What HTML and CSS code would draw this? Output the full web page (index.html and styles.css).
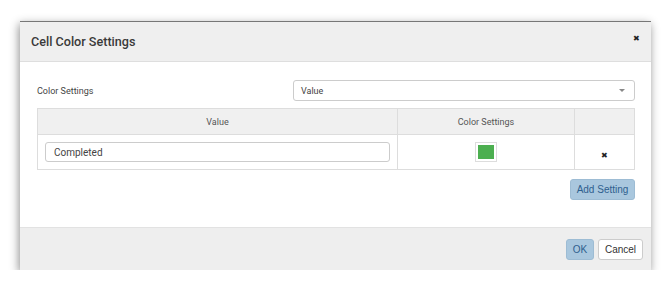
FILE: index.html
```html
<!DOCTYPE html>
<html>
<head>
  <title>Cell Color Settings</title>
  <meta http-equiv="Content-Type" content="text/html; charset=UTF-8" />
  <link rel="stylesheet" href="styles.css">
</head>
<body>
  <div class="modal">
    <div class="modal-header">
      <h4 class="modal-title">Cell Color Settings</h4>
      <span class="close">&#x2716;</span>
    </div>
    <div class="modal-body">
      <div class="row">
        <label class="label">Color Settings</label>
        <div class="select">
          <span>Value</span>
          <span class="caret"></span>
        </div>
      </div>
      <table class="settings">
        <thead>
          <tr>
            <th class="col-value">Value</th>
            <th class="col-color">Color Settings</th>
            <th class="col-del"></th>
          </tr>
        </thead>
        <tbody>
          <tr>
            <td><input type="text" class="text-input" value="Completed"></td>
            <td class="center"><span class="swatch"><span class="swatch-fill"></span></span></td>
            <td class="center"><span class="remove">&#x2716;</span></td>
          </tr>
        </tbody>
      </table>
      <div class="actions">
        <button class="btn btn-primary">Add Setting</button>
      </div>
    </div>
    <div class="modal-footer">
      <button class="btn btn-primary btn-ok">OK</button>
      <button class="btn btn-default">Cancel</button>
    </div>
  </div>
</body>
</html>
```

FILE: styles.css
```css
body {
  margin: 0;
  background-color: #fff;
  font-family: Roboto, "Liberation Sans", sans-serif;
  color: #333;
}
.modal {
  width: 631px;
  margin: 21px 0 0 20px;
  border-top: 1px solid #777;
  background-color: #fff;
  box-shadow: -1px 3px 9px rgba(0, 0, 0, 0.45);
}
.modal-header {
  height: 39px;
  display: flex;
  align-items: center;
  justify-content: space-between;
  padding: 0 11px;
  background-color: #efefef;
  border-bottom: 1px solid #dedede;
}
.modal-title {
  margin: 0;
  font-size: 12.6px;
  font-weight: 500;
  color: #3a3a3a;
}
.close {
  font-size: 8px;
  color: #222;
  margin-top: -6px;
  margin-right: 0;
}
.modal-body {
  height: 165px;
  padding: 0 16px 0 17px;
  box-sizing: border-box;
  padding-top: 18px;
}
.row {
  display: flex;
  align-items: center;
  justify-content: space-between;
}
.label {
  font-size: 9px;
  color: #444;
}
.select {
  width: 342px;
  height: 21px;
  box-sizing: border-box;
  border: 1px solid #ccc;
  border-radius: 3px;
  display: flex;
  align-items: center;
  justify-content: space-between;
  padding: 0 7px;
  font-size: 9px;
  color: #444;
}
.caret {
  width: 0;
  height: 0;
  border-left: 3px solid transparent;
  border-right: 3px solid transparent;
  border-top: 3px solid #888;
  margin-right: 2px;
}
table.settings {
  width: 598px;
  margin-top: 7px;
  border-collapse: collapse;
}
.settings th, .settings td {
  border: 1px solid #ddd;
  padding: 0;
}
.settings th {
  height: 25px;
  background-color: #f0f0f0;
  font-size: 9px;
  font-weight: normal;
  color: #555;
}
.settings td {
  height: 34px;
}
.col-value {
  width: 358px;
}
.col-color {
  width: 176px;
}
.center {
  text-align: center;
}
.text-input {
  display: block;
  width: 345px;
  height: 20px;
  margin: 0 7px;
  box-sizing: border-box;
  border: 1px solid #ccc;
  border-radius: 3px;
  padding: 0 8px;
  font-family: Roboto, sans-serif;
  font-size: 10px;
  color: #444;
}
.swatch {
  display: inline-block;
  vertical-align: middle;
  width: 22px;
  height: 20px;
  box-sizing: border-box;
  border: 1px solid #ddd;
  padding: 2px;
  background-color: #fff;
}
.swatch-fill {
  display: block;
  width: 100%;
  height: 100%;
  background-color: #4caf50;
}
.remove {
  font-size: 8px;
  color: #222;
}
.actions {
  display: flex;
  justify-content: flex-end;
  margin-top: 9px;
}
.btn {
  height: 21px;
  box-sizing: border-box;
  border-radius: 3px;
  font-family: "Liberation Sans", Arial, sans-serif;
  font-size: 10px;
  padding: 0 7px;
  cursor: pointer;
}
.btn-primary {
  background-color: #a9c7de;
  border: 1px solid #9dbcd4;
  color: #2f5f8e;
}
.btn-default {
  background-color: #fff;
  border: 1px solid #ccc;
  color: #333;
}
.modal-footer {
  height: 43px;
  box-sizing: border-box;
  background-color: #eee;
  border-top: 1px solid #e2e2e2;
  display: flex;
  justify-content: flex-end;
  align-items: flex-start;
  gap: 4px;
  padding: 11px 8px 0 0;
}
.btn-ok {
  width: 28px;
  padding: 0;
}
.actions .btn-primary {
  width: 65px;
  padding: 0;
}
.btn-default {
  width: 45px;
  padding: 0;
}
```
